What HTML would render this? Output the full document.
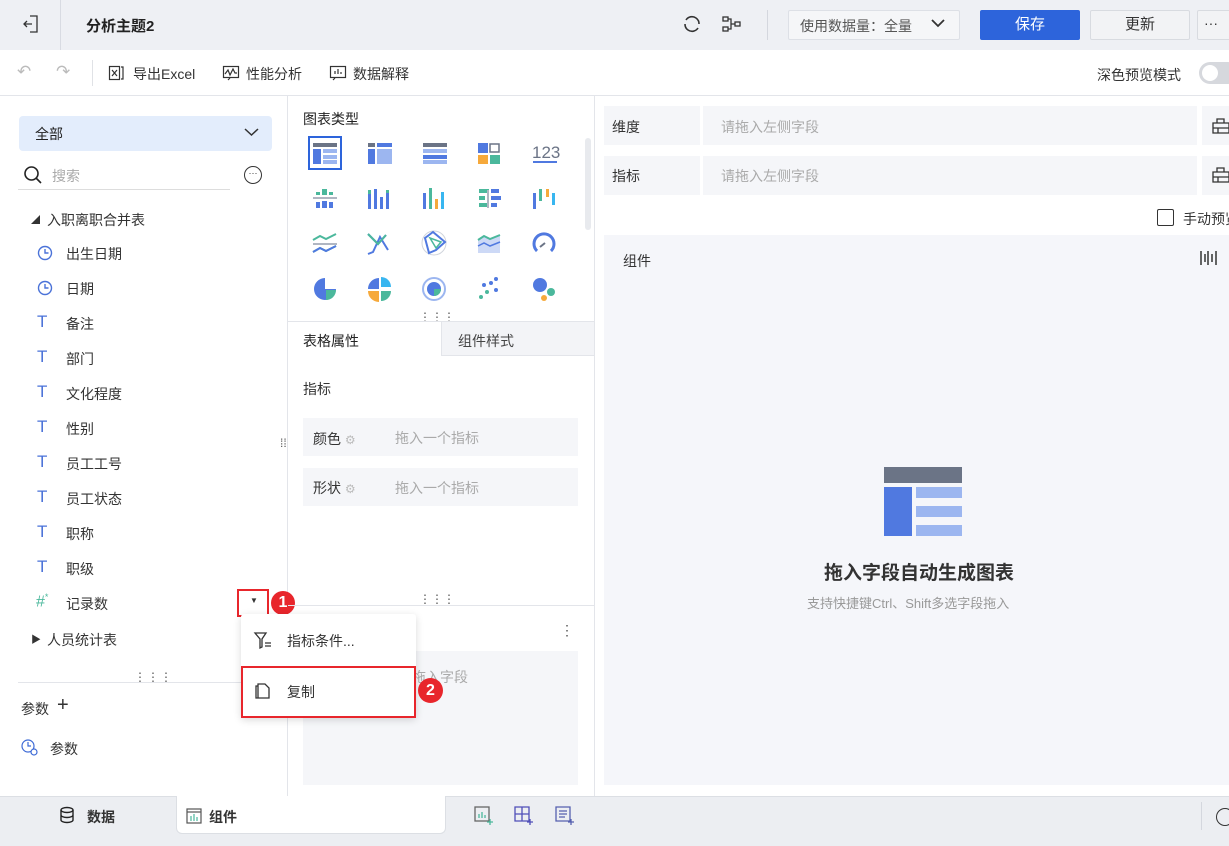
<!DOCTYPE html>
<html><head><meta charset="utf-8"><style>
*{box-sizing:border-box;margin:0;padding:0}
body{width:1229px;height:846px;overflow:hidden;font-family:"Liberation Sans","Noto Sans CJK SC",sans-serif;font-size:14px;color:#333;background:#fff;position:relative}
.a{position:absolute}
.t{position:absolute;white-space:nowrap}
.g{color:#aaa}
</style></head><body>
<!-- top bar -->
<div class="a" style="left:0;top:0;width:1229px;height:50px;background:#eef0f4"></div>
<div class="a" style="left:60px;top:0;width:1px;height:50px;background:#d8dbe2"></div>
<svg class="a" style="left:22px;top:14px" width="18" height="20" viewBox="0 0 18 20" fill="none" stroke="#333" stroke-width="1.3"><path d="M8 2h7v16H8M10 10H2M5 7l-3 3 3 3"/></svg>
<div class="t" style="left:86px;top:15px;font-weight:bold;font-size:15px;color:#222">分析主题2</div>
<svg class="a" style="left:682px;top:14px" width="20" height="20" viewBox="0 0 20 20" fill="none" stroke="#333" stroke-width="1.6"><path d="M4 6a7 7 0 0 1 10-2M16 14a7 7 0 0 1-10 2M3 10a7 7 0 0 0 3 6M17 10a7 7 0 0 0-3-6"/></svg>
<svg class="a" style="left:721px;top:15px" width="22" height="18" viewBox="0 0 22 18" fill="none" stroke="#333" stroke-width="1.3"><rect x="2" y="2" width="5" height="4"/><rect x="2" y="12" width="5" height="4"/><rect x="14" y="7" width="5" height="4"/><path d="M7 4h3v10H7M10 9h4"/></svg>
<div class="a" style="left:767px;top:10px;width:1px;height:30px;background:#d4d7de"></div>
<div class="a" style="left:788px;top:10px;width:172px;height:30px;border:1px solid #dde0e6;background:#f5f6f8;border-radius:2px"></div>
<div class="t" style="left:800px;top:16px;color:#555">使用数据量：全量</div>
<svg class="a" style="left:930px;top:18px" width="16" height="12" viewBox="0 0 16 12" fill="none" stroke="#333" stroke-width="1.8"><path d="M2 2l6 6 6-6"/></svg>
<div class="a" style="left:980px;top:10px;width:100px;height:30px;background:#2d64db;border-radius:2px;color:#fff;text-align:center;line-height:30px;font-size:15px">保存</div>
<div class="a" style="left:1090px;top:10px;width:100px;height:30px;background:#f2f3f5;border:1px solid #d8dbe0;border-radius:2px;text-align:center;line-height:28px;font-size:15px">更新</div>
<div class="a" style="left:1197px;top:10px;width:40px;height:30px;background:#f2f3f5;border:1px solid #d8dbe0;border-radius:2px;line-height:24px;padding-left:6px">···</div>
<!-- toolbar -->
<div class="a" style="left:0;top:95px;width:1229px;height:1px;background:#e3e5ea"></div>
<div class="t" style="left:17px;top:62px;color:#bbb;font-size:17px">↶</div>
<div class="t" style="left:56px;top:62px;color:#bbb;font-size:17px">↷</div>
<div class="a" style="left:92px;top:60px;width:1px;height:26px;background:#e0e2e6"></div>
<svg class="a" style="left:108px;top:65px" width="16" height="16" viewBox="0 0 16 16" fill="none" stroke="#333" stroke-width="1.2"><rect x="1.5" y="1.5" width="10" height="13"/><path d="M4 5l5 6M9 5l-5 6M13 2h2v12h-2"/></svg>
<div class="t" style="left:133px;top:64px">导出Excel</div>
<svg class="a" style="left:222px;top:65px" width="18" height="16" viewBox="0 0 18 16" fill="none" stroke="#333" stroke-width="1.2"><rect x="1.5" y="1.5" width="15" height="11"/><path d="M3 9l3-4 2 5 3-6 2 4h2M6 15l2-2"/></svg>
<div class="t" style="left:246px;top:64px">性能分析</div>
<svg class="a" style="left:329px;top:65px" width="18" height="16" viewBox="0 0 18 16" fill="none" stroke="#333" stroke-width="1.2"><rect x="1.5" y="1.5" width="15" height="11"/><path d="M6 9V6M9 9V4M12 9V7M4 15l2-2"/></svg>
<div class="t" style="left:353px;top:64px">数据解释</div>
<div class="t" style="left:1097px;top:65px">深色预览模式</div>
<div class="a" style="left:1199px;top:62px;width:40px;height:22px;border-radius:11px;background:#d6d8dd"></div>
<div class="a" style="left:1202px;top:65px;width:16px;height:16px;border-radius:8px;background:#fff"></div>
<!-- panel dividers -->
<div class="a" style="left:287px;top:96px;width:1px;height:700px;background:#e3e5ea"></div>
<div class="a" style="left:594px;top:96px;width:1px;height:700px;background:#e3e5ea"></div>
<!-- left panel -->
<div class="a" style="left:19px;top:116px;width:253px;height:35px;background:#e3edfc;border-radius:4px"></div>
<div class="t" style="left:35px;top:124px;color:#222">全部</div>
<svg class="a" style="left:244px;top:127px" width="15" height="10" viewBox="0 0 15 10" fill="none" stroke="#333" stroke-width="1.5"><path d="M1 2l6.5 6L14 2"/></svg>
<svg class="a" style="left:23px;top:165px" width="20" height="20" viewBox="0 0 20 20" fill="none" stroke="#222" stroke-width="1.6"><circle cx="8.5" cy="8.5" r="6.5"/><path d="M13 13l5 5"/></svg>
<div class="t g" style="left:52px;top:166px">搜索</div>
<div class="a" style="left:18px;top:189px;width:212px;height:1px;background:#ddd"></div>
<div class="a" style="left:244px;top:166px;width:18px;height:18px;border:1.4px solid #333;border-radius:50%;font-size:9px;line-height:12px;text-align:center">···</div>
<div class="t" style="left:31px;top:213px;font-size:9px">◢</div>
<div class="t" style="left:47px;top:210px">入职离职合并表</div>
<div class="t" style="left:31px;top:631px;font-size:10px">▶</div>
<div class="t" style="left:47px;top:630px">人员统计表</div>
<div id="items"></div>
<div class="a" style="left:237px;top:589px;width:32px;height:28px;border:2px solid #e8262c"></div>
<div class="t" style="left:250px;top:596px;font-size:8px">▼</div>
<div class="a" style="left:271px;top:591px;width:24px;height:24px;border-radius:12px;background:#e8262c;color:#fff;font-weight:bold;text-align:center;line-height:24px;font-size:16px">1</div>
<div class="a" style="left:18px;top:682px;width:270px;height:1px;background:#e3e5ea"></div>
<div class="t" style="left:134px;top:670px;font-size:12px;letter-spacing:1px;color:#555">⋮⋮⋮</div>
<div class="t" style="left:21px;top:699px">参数</div>
<div class="t" style="left:57px;top:694px;font-size:20px">+</div>
<svg class="a" style="left:20px;top:738px" width="20" height="20" viewBox="0 0 20 20" fill="none" stroke="#3e6bd6" stroke-width="1.2"><circle cx="8" cy="8" r="6"/><path d="M8 4v4h3"/><circle cx="14" cy="14" r="3" fill="#fff"/></svg>
<div class="t" style="left:50px;top:739px">参数</div>
<div class="t" style="left:280px;top:436px;color:#555;font-size:12px">⁞⁞</div>
<!-- middle -->
<div class="t" style="left:303px;top:109px;color:#222">图表类型</div>
<div class="a" style="left:308px;top:136px;width:34px;height:34px;border:2px solid #2d64db"></div>
<svg class="a" style="left:295px;top:130px" width="290" height="175" viewBox="295 130 290 175">
<g>
<rect x="313" y="143" width="24" height="4" fill="#6b7486"/><rect x="313" y="149" width="8" height="15" fill="#5079e0"/><rect x="323" y="149" width="14" height="4" fill="#9cb6f0"/><rect x="323" y="155" width="14" height="4" fill="#9cb6f0"/><rect x="323" y="160" width="14" height="4" fill="#9cb6f0"/>
<rect x="368" y="143" width="7" height="4" fill="#6b7486"/><rect x="377" y="143" width="15" height="4" fill="#5079e0"/><rect x="368" y="149" width="7" height="15" fill="#5079e0"/><rect x="377" y="149" width="15" height="15" fill="#9cb6f0"/>
<rect x="423" y="143" width="24" height="4" fill="#6b7486"/><rect x="423" y="149" width="24" height="4" fill="#9cb6f0"/><rect x="423" y="155" width="24" height="4" fill="#5079e0"/><rect x="423" y="160" width="24" height="4" fill="#9cb6f0"/>
<rect x="478" y="143" width="10" height="10" fill="#5079e0"/><rect x="490" y="144" width="9" height="8" fill="none" stroke="#6b7486" stroke-width="1.5"/><rect x="478" y="155" width="10" height="9" fill="#f6a93b"/><rect x="490" y="155" width="10" height="9" fill="#4bb89c"/>
<text x="532" y="158" font-size="17" fill="#6b7486" font-family="Liberation Sans">123</text><rect x="533" y="161" width="24" height="2" fill="#5079e0"/>
<rect x="313" y="197" width="24" height="2" fill="#b0b6c2"/><rect x="322" y="189" width="5" height="6" fill="#4bb89c"/><rect x="329" y="192" width="4" height="3" fill="#4bb89c"/><rect x="316" y="192" width="4" height="3" fill="#4bb89c"/><rect x="316" y="202" width="4" height="6" fill="#5079e0"/><rect x="322" y="201" width="5" height="7" fill="#5079e0"/><rect x="329" y="202" width="4" height="6" fill="#5079e0"/>
<rect x="368" y="194" width="3" height="15" fill="#5079e0"/><rect x="368" y="190" width="3" height="4" fill="#4bb89c"/><rect x="374" y="189" width="3" height="20" fill="#5079e0"/><rect x="380" y="197" width="3" height="12" fill="#5079e0"/><rect x="386" y="193" width="3" height="16" fill="#5079e0"/><rect x="386" y="190" width="3" height="3" fill="#4bb89c"/>
<rect x="423" y="193" width="3" height="16" fill="#5079e0"/><rect x="429" y="188" width="3" height="21" fill="#4bb89c"/><rect x="435" y="199" width="3" height="10" fill="#f6a93b"/><rect x="441" y="192" width="3" height="17" fill="#38b6f0"/>
<rect x="479" y="189" width="10" height="4" fill="#4bb89c"/><rect x="491" y="189" width="8" height="4" fill="#5079e0"/><rect x="479" y="196" width="6" height="4" fill="#4bb89c"/><rect x="487" y="190" width="2" height="18" fill="#b0b6c2"/><rect x="491" y="196" width="10" height="4" fill="#5079e0"/><rect x="479" y="203" width="8" height="4" fill="#4bb89c"/><rect x="491" y="203" width="6" height="4" fill="#5079e0"/>
<rect x="533" y="193" width="3" height="16" fill="#5079e0"/><rect x="539" y="189" width="3" height="12" fill="#4bb89c"/><rect x="546" y="189" width="3" height="8" fill="#f6a93b"/><rect x="552" y="193" width="3" height="12" fill="#38b6f0"/>
<path d="M313 240l7-4 6 3 10-5M313 252l7-4 6 3 10-5" stroke="#4bb89c" stroke-width="2" fill="none"/><path d="M313 252l7-4 6 3 10-5" stroke="#5079e0" stroke-width="2" fill="none"/><rect x="313" y="243" width="24" height="2" fill="#b0b6c2"/>
<path d="M368 254l5-2 7-15 8 13M368 234l10 10 8-9" stroke="#5079e0" stroke-width="2" fill="none"/><path d="M368 234l10 10 8-9" stroke="#4bb89c" stroke-width="2" fill="none"/>
<circle cx="434" cy="243" r="12" fill="none" stroke="#d0d4dc"/><path d="M425 238l8-6 12 10-9 8-7 3z" stroke="#5079e0" stroke-width="2" fill="none"/><path d="M430 238l11 4-5 6z" stroke="#4bb89c" stroke-width="1.5" fill="none"/>
<path d="M478 240l6-4 6 3 10-4v18h-22z" fill="#cdd9f6"/><path d="M478 240l6-4 6 3 10-4" stroke="#4bb89c" stroke-width="2" fill="none"/><path d="M478 246l6-3 6 3 10-4" stroke="#5079e0" stroke-width="1.5" fill="none"/>
<path d="M537 251a10 10 0 1 1 14 0" stroke="#5079e0" stroke-width="3" fill="none"/><path d="M540 247l5-4" stroke="#6b7486" stroke-width="2"/>
<path d="M325 289V278a11 11 0 1 0 11 11z" fill="#5079e0"/><path d="M326 290h10a10 10 0 0 1-10 10z" fill="#4bb89c"/>
<path d="M379 289v-11a11 11 0 0 0-11 11z" fill="#5079e0"/><path d="M381 287v-10a10 10 0 0 1 10 10z" fill="#38b6f0"/><path d="M379 291h-11a11 11 0 0 0 11 11z" fill="#f6a93b"/><path d="M381 291h10a10 10 0 0 1-10 10z" fill="#4bb89c"/>
<circle cx="434" cy="289" r="11" fill="none" stroke="#9cb6f0" stroke-width="2"/><circle cx="434" cy="289" r="7" fill="#5079e0"/><path d="M434 289h7a7 7 0 0 1-7 7z" fill="#4bb89c"/>
<circle cx="496" cy="279" r="2" fill="#5079e0"/><circle cx="491" cy="283" r="2" fill="#5079e0"/><circle cx="484" cy="285" r="2" fill="#5079e0"/><circle cx="496" cy="290" r="2" fill="#5079e0"/><circle cx="487" cy="292" r="2" fill="#4bb89c"/><circle cx="481" cy="297" r="2" fill="#4bb89c"/>
<circle cx="540" cy="285" r="7" fill="#5079e0"/><circle cx="551" cy="292" r="4" fill="#4bb89c"/><circle cx="544" cy="298" r="3" fill="#f6a93b"/>
</g></svg>
<div class="a" style="left:585px;top:138px;width:6px;height:92px;background:#e8eaee;border-radius:3px"></div>
<div class="t" style="left:419px;top:310px;font-size:12px;color:#555">⋮⋮⋮</div>
<div class="a" style="left:288px;top:321px;width:306px;height:1px;background:#e3e5ea"></div>
<div class="a" style="left:441px;top:322px;width:153px;height:34px;background:#f3f4f7;border-left:1px solid #e3e5ea;border-bottom:1px solid #e3e5ea"></div>
<div class="t" style="left:303px;top:331px;color:#222">表格属性</div>
<div class="t" style="left:458px;top:331px;color:#444">组件样式</div>
<div class="t" style="left:303px;top:379px">指标</div>
<div class="a" style="left:303px;top:418px;width:275px;height:38px;background:#f5f6f9"></div>
<div class="a" style="left:303px;top:468px;width:275px;height:38px;background:#f5f6f9"></div>
<div class="t" style="left:313px;top:429px">颜色 <span style="color:#bbb;font-size:12px">⚙</span></div>
<div class="t" style="left:313px;top:478px">形状 <span style="color:#bbb;font-size:12px">⚙</span></div>
<div class="t g" style="left:395px;top:428px">拖入一个指标</div>
<div class="t g" style="left:395px;top:478px">拖入一个指标</div>
<div class="t" style="left:419px;top:592px;font-size:12px;color:#555">⋮⋮⋮</div>
<div class="a" style="left:288px;top:605px;width:306px;height:1px;background:#e3e5ea"></div>
<div class="t" style="left:560px;top:622px;color:#555">⋮</div>
<div class="a" style="left:303px;top:651px;width:275px;height:134px;background:#f5f6f9"></div>
<div class="t g" style="left:412px;top:667px">拖入字段</div>
<!-- dropdown menu -->
<div class="a" style="left:241px;top:614px;width:175px;height:104px;background:#fff;box-shadow:0 2px 8px rgba(0,0,0,.15);border-radius:3px"></div>
<svg class="a" style="left:253px;top:630px" width="20" height="20" viewBox="0 0 20 20" fill="none" stroke="#333" stroke-width="1.3"><path d="M2 3h11L9 9v8l-2 1V9z M12 13h6M12 16h6"/></svg>
<div class="t" style="left:287px;top:631px">指标条件...</div>
<div class="a" style="left:241px;top:666px;width:175px;height:52px;border:2px solid #e8262c"></div>
<svg class="a" style="left:254px;top:682px" width="18" height="18" viewBox="0 0 18 18" fill="none" stroke="#333" stroke-width="1.3"><path d="M4 4V2h7l4 4v10H4zM4 4H2v12h2"/></svg>
<div class="t" style="left:287px;top:682px">复制</div>
<div class="a" style="left:418px;top:678px;width:25px;height:25px;border-radius:13px;background:#e8262c;color:#fff;font-weight:bold;text-align:center;line-height:25px;font-size:16px">2</div>
<!-- right -->
<div class="a" style="left:604px;top:106px;width:96px;height:39px;background:#f5f6f9"></div>
<div class="a" style="left:703px;top:106px;width:494px;height:39px;background:#f5f6f9"></div>
<div class="a" style="left:1202px;top:106px;width:30px;height:39px;background:#f5f6f9"></div>
<div class="a" style="left:604px;top:156px;width:96px;height:39px;background:#f5f6f9"></div>
<div class="a" style="left:703px;top:156px;width:494px;height:39px;background:#f5f6f9"></div>
<div class="a" style="left:1202px;top:156px;width:30px;height:39px;background:#f5f6f9"></div>
<div class="t" style="left:612px;top:117px">维度</div>
<div class="t" style="left:612px;top:166px">指标</div>
<div class="t g" style="left:721px;top:117px">请拖入左侧字段</div>
<div class="t g" style="left:721px;top:166px">请拖入左侧字段</div>
<svg class="a" style="left:1212px;top:117px" width="17" height="17" viewBox="0 0 17 17" fill="none" stroke="#333" stroke-width="1.3"><path d="M1 6h16v10H1zM5 6V2h7v4M1 11h16M6 11v5"/></svg>
<svg class="a" style="left:1212px;top:166px" width="17" height="17" viewBox="0 0 17 17" fill="none" stroke="#333" stroke-width="1.3"><path d="M1 6h16v10H1zM5 6V2h7v4M1 11h16M6 11v5"/></svg>
<div class="a" style="left:1157px;top:209px;width:17px;height:17px;border:1.3px solid #333;border-radius:2px"></div>
<div class="t" style="left:1183px;top:209px">手动预览</div>
<div class="a" style="left:604px;top:235px;width:625px;height:550px;background:#f5f6fa"></div>
<div class="t" style="left:623px;top:251px">组件</div>
<svg class="a" style="left:1200px;top:249px" width="17" height="18" viewBox="0 0 17 18" stroke="#333" stroke-width="1.5"><path d="M1 2v14M5 5v8M8 2v14M12 5v8M16 2v14"/></svg>
<div class="a" style="left:884px;top:467px;width:78px;height:16px;background:#6b7486"></div>
<div class="a" style="left:884px;top:487px;width:28px;height:49px;background:#5079e0"></div>
<div class="a" style="left:916px;top:487px;width:46px;height:11px;background:#9cb6f0"></div>
<div class="a" style="left:916px;top:506px;width:46px;height:11px;background:#9cb6f0"></div>
<div class="a" style="left:916px;top:525px;width:46px;height:11px;background:#9cb6f0"></div>
<div class="t" style="left:824px;top:558px;font-size:19px;font-weight:bold;color:#333">拖入字段自动生成图表</div>
<div class="t" style="left:807px;top:593px;font-size:13px;color:#999">支持快捷键Ctrl、Shift多选字段拖入</div>
<!-- bottom -->
<div class="a" style="left:0;top:796px;width:1229px;height:50px;background:#eceef2;border-top:1px solid #dcdfe4"></div>
<div class="a" style="left:176px;top:796px;width:270px;height:38px;background:#fff;border-radius:0 0 6px 6px;border:1px solid #dcdfe4;border-top:none"></div>
<svg class="a" style="left:58px;top:806px" width="18" height="18" viewBox="0 0 18 18" fill="none" stroke="#222" stroke-width="1.4"><ellipse cx="9" cy="4" rx="6" ry="2.5"/><path d="M3 4v10c0 1.4 2.7 2.5 6 2.5s6-1.1 6-2.5V4M3 9c0 1.4 2.7 2.5 6 2.5s6-1.1 6-2.5"/></svg>
<div class="t" style="left:87px;top:807px;font-weight:bold">数据</div>
<svg class="a" style="left:186px;top:808px" width="16" height="16" viewBox="0 0 16 16" fill="none" stroke="#4bb89c" stroke-width="1.2"><rect x="1" y="1" width="14" height="14" stroke="#555"/><path d="M1 4h14" stroke="#555"/><path d="M5 13V8M8 13V6M11 13V9"/></svg>
<div class="t" style="left:209px;top:807px;font-weight:bold">组件</div>
<svg class="a" style="left:474px;top:806px" width="20" height="20" viewBox="0 0 20 20" fill="none" stroke="#4bb89c" stroke-width="1.3"><rect x="1" y="1" width="14" height="14" stroke="#666"/><path d="M5 12V8M8 12V6M11 12V9M16 13v6M13 16h6"/></svg>
<svg class="a" style="left:514px;top:806px" width="20" height="20" viewBox="0 0 20 20" fill="none" stroke="#4f4fb8" stroke-width="1.3"><path d="M1 1h14v14H1zM8 1v14M1 8h14M16 13v6M13 16h6"/></svg>
<svg class="a" style="left:555px;top:806px" width="20" height="20" viewBox="0 0 20 20" fill="none" stroke="#5560b0" stroke-width="1.3"><path d="M1 1h14v14H1zM4 5h8M4 8h8M4 11h6M16 13v6M13 16h6"/></svg>
<div class="a" style="left:1201px;top:802px;width:1px;height:28px;background:#d4d7de"></div>
<div class="a" style="left:1216px;top:808px;width:18px;height:18px;border:1.4px solid #333;border-radius:50%"></div>
<script>
var it=[["c","出生日期"],["c","日期"],["t","备注"],["t","部门"],["t","文化程度"],["t","性别"],["t","员工工号"],["t","员工状态"],["t","职称"],["t","职级"],["n","记录数"]];
var h="";it.forEach(function(x,i){var y=252+i*35-8;
if(x[0]=="c")h+='<svg class="a" style="left:37px;top:'+(y+1)+'px" width="16" height="16" viewBox="0 0 16 16" fill="none" stroke="#4a72d8" stroke-width="1.4"><circle cx="8" cy="8" r="6.5"/><path d="M8 4v4h3.5"/></svg>';
else if(x[0]=="t")h+='<div class="t" style="left:37px;top:'+(y-2)+'px;font-size:17px;color:#4a72d8">T</div>';
else h+='<div class="t" style="left:36px;top:'+(y-2)+'px;font-size:16px;color:#4bb89c">#<sup style="font-size:9px">*</sup></div>';
h+='<div class="t" style="left:66px;top:'+y+'px">'+x[1]+'</div>';});
document.getElementById("items").innerHTML=h;
</script>
</body></html>
